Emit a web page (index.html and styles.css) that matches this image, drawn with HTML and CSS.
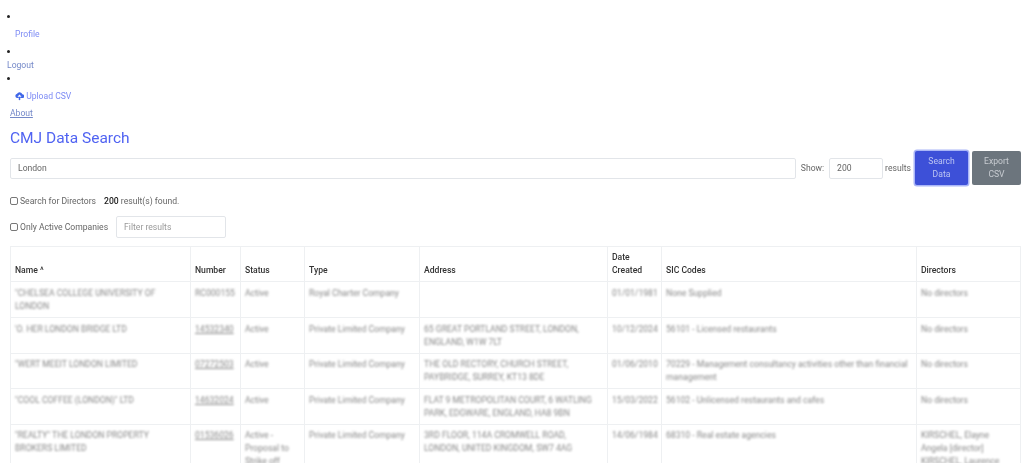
FILE: index.html
```html
<!DOCTYPE html>
<html lang="en">
<head>
<meta charset="utf-8">
<title>CMJ Data Search</title>
<link rel="stylesheet" href="styles.css">
</head>
<body>
<div class="page">
  <ul class="nav">
    <li><a class="nav-link pad" href="#">Profile</a></li>
    <li><a class="nav-link logout" href="#">Logout</a></li>
    <li><a class="nav-link pad" href="#"><svg class="cloud" viewBox="0 0 24 24" aria-hidden="true"><path d="M19.500 7.500A7.500 7.500 0 0 0 5.500 6 6 6 0 0 0 5 17.500h5V14H6.500L12 8l5.500 6H14v3.500h5.500a5 5 0 0 0 0-10z"/><path d="M10 14h4v9h-4z"/></svg> Upload CSV</a></li>
  </ul>
  <a class="about" href="#">About</a>
  <h1 class="title">CMJ Data Search</h1>
  <div class="search-row">
    <input class="field search-input" type="text" value="London">
    <span class="label show">Show:</span>
    <input class="field count-input" type="text" value="200">
    <span class="label results-label">results</span>
    <button class="btn btn-primary">Search<br>Data</button>
    <button class="btn btn-secondary">Export<br>CSV</button>
  </div>
  <div class="option-row first">
    <label class="check"><input type="checkbox"> Search for Directors</label>
    <span class="found"><b>200</b> result(s) found.</span>
  </div>
  <div class="option-row second">
    <label class="check"><input type="checkbox"> Only Active Companies</label>
    <input class="field filter-input" type="text" placeholder="Filter results">
  </div>
  <table class="results">
    <thead>
      <tr><th>Name ^</th><th>Number</th><th>Status</th><th>Type</th><th>Address</th><th>Date Created</th><th>SIC Codes</th><th>Directors</th></tr>
    </thead>
    <tbody>
      <tr><td><span class="soft">"CHELSEA COLLEGE UNIVERSITY OF LONDON</span></td><td><span class="soft">RC000155</span></td><td><span class="soft">Active</span></td><td><span class="soft">Royal Charter Company</span></td><td></td><td><span class="soft">01/01/1981</span></td><td><span class="soft">None Supplied</span></td><td><span class="soft">No directors</span></td></tr>
      <tr><td><span class="soft">'O. HER LONDON BRIDGE LTD</span></td><td><span class="soft num">14532340</span></td><td><span class="soft">Active</span></td><td><span class="soft">Private Limited Company</span></td><td><span class="soft">65 GREAT PORTLAND STREET, LONDON, ENGLAND, W1W 7LT</span></td><td><span class="soft">10/12/2024</span></td><td><span class="soft">56101 - Licensed restaurants</span></td><td><span class="soft">No directors</span></td></tr>
      <tr><td><span class="soft">"WERT MEEIT LONDON LIMITED</span></td><td><span class="soft num">07272503</span></td><td><span class="soft">Active</span></td><td><span class="soft">Private Limited Company</span></td><td><span class="soft">THE OLD RECTORY, CHURCH STREET, PAYBRIDGE, SURREY, KT13 8DE</span></td><td><span class="soft">01/06/2010</span></td><td><span class="soft">70229 - Management consultancy activities other than financial management</span></td><td><span class="soft">No directors</span></td></tr>
      <tr><td><span class="soft">"COOL COFFEE (LONDON)" LTD</span></td><td><span class="soft num">14632024</span></td><td><span class="soft">Active</span></td><td><span class="soft">Private Limited Company</span></td><td><span class="soft">FLAT 9 METROPOLITAN COURT, 6 WATLING PARK, EDGWARE, ENGLAND, HA8 9BN</span></td><td><span class="soft">15/03/2022</span></td><td><span class="soft">56102 - Unlicensed restaurants and cafes</span></td><td><span class="soft">No directors</span></td></tr>
      <tr><td><span class="soft">"REALTY" THE LONDON PROPERTY BROKERS LIMITED</span></td><td><span class="soft num">01536026</span></td><td><span class="soft">Active - Proposal to Strike off</span></td><td><span class="soft">Private Limited Company</span></td><td><span class="soft">3RD FLOOR, 114A CROMWELL ROAD, LONDON,&nbsp;UNITED KINGDOM, SW7 4AG</span></td><td><span class="soft">14/06/1984</span></td><td><span class="soft">68310 - Real estate agencies</span></td><td><span class="soft">KIRSCHEL, Elayne Angela [director] KIRSCHEL, Laurence</span></td></tr>
    </tbody>
  </table>
</div>
</body>
</html>
```

FILE: styles.css
```css
html, body {
  margin: 0;
  height: 463px;
  overflow: hidden;
  background: #fff;
}
body {
  font-family: Roboto, "Liberation Sans", Arial, sans-serif;
  font-size: 8.600px;
  line-height: 13px;
  color: #666;
}
.page {
  padding: 10px 3px 0 10px;
  filter: blur(0.5px);
}
.nav {
  list-style: none;
  margin: 0 0 0 -10px;
  padding: 0 0 0 7px;
}
.nav li::before {
  content: "";
  display: block;
  width: 3px;
  height: 3px;
  margin: 5px 0 6px;
  border-radius: 50%;
  background: #222;
}
.nav-link {
  display: block;
  color: #7e8cf5;
  text-decoration: none;
}
.pad {
  padding: 4px 8px;
}
.logout {
  color: #7488c8;
}
.cloud {
  width: 9px;
  height: 10px;
  fill: #3f66e8;
  vertical-align: -2px;
}
.about {
  display: block;
  color: #7488c8;
  text-decoration: underline;
}
.title {
  margin: 8px 0 7px;
  font-size: 15.500px;
  line-height: 20px;
  font-weight: 400;
  color: #5063f2;
}
.field {
  box-sizing: border-box;
  height: 21px;
  padding: 0 7px;
  border: 1px solid #e2e5e9;
  border-radius: 2px;
  font: inherit;
  color: #666;
  background: #fff;
}
.field::placeholder {
  color: #999;
}
.search-row {
  display: flex;
  align-items: center;
  margin-top: -4px;
  height: 34px;
}
.search-input {
  flex: 1;
}
.label {
  margin: 0 4px;
}
.show {
  margin: 0 5px;
}
.results-label {
  margin-left: 2px;
}
.count-input {
  width: 54px;
}
.btn {
  box-sizing: border-box;
  height: 34px;
  padding: 0;
  border: 0;
  border-radius: 2px;
  font: inherit;
  color: #bcc4f2;
}
.btn-primary {
  width: 53px;
  background: #3d50d8;
  box-shadow: 0 0 0 1.500px #aab6f7;
}
.btn-secondary {
  width: 49px;
  margin-left: 4px;
  color: #c8ccd1;
  background: #6c757d;
}
.option-row {
  display: flex;
  align-items: center;
}
.first {
  margin-top: 9px;
  height: 14px;
}
.second {
  margin-top: 8px;
  height: 22px;
}
.check {
  display: flex;
  align-items: center;
  gap: 2px;
}
.check input {
  appearance: none;
  box-sizing: border-box;
  width: 8px;
  height: 8px;
  margin: 0;
  border: 1px solid #777;
  border-radius: 2px;
}
.found {
  margin-left: 8px;
}
.found b {
  font-weight: 500;
  color: #222;
}
.filter-input {
  width: 110px;
  height: 22px;
  margin-left: 8px;
}
.results {
  box-sizing: border-box;
  width: 1011px;
  margin-top: 8px;
  table-layout: fixed;
  border-collapse: collapse;
}
.results th,
.results td {
  padding: 5px 3px 4px 4px;
  border: 1px solid #eef0f2;
  text-align: left;
  vertical-align: top;
}
.results th {
  height: 35px;
  box-sizing: border-box;
  padding-top: 0;
  vertical-align: bottom;
  font-weight: 500;
  color: #333;
}
.results th:nth-child(1) { width: 180px; }
.results th:nth-child(2) { width: 50px; }
.results th:nth-child(3) { width: 64px; }
.results th:nth-child(4) { width: 115px; }
.results th:nth-child(5) { width: 188px; }
.results th:nth-child(6) { width: 54px; }
.results th:nth-child(7) { width: 255px; }
.results th:nth-child(8) { width: 104px; }
.results tbody tr {
  height: 36px;
}
.results tbody tr:nth-child(3) {
  height: 35px;
}
.results tbody tr:nth-child(3) td {
  padding-top: 4px;
}
.results tbody tr:nth-child(5) td {
  padding-top: 4px;
}
.soft {
  display: block;
  filter: blur(1.100px);
  color: #888;
}
.num {
  text-decoration: underline;
}
```
